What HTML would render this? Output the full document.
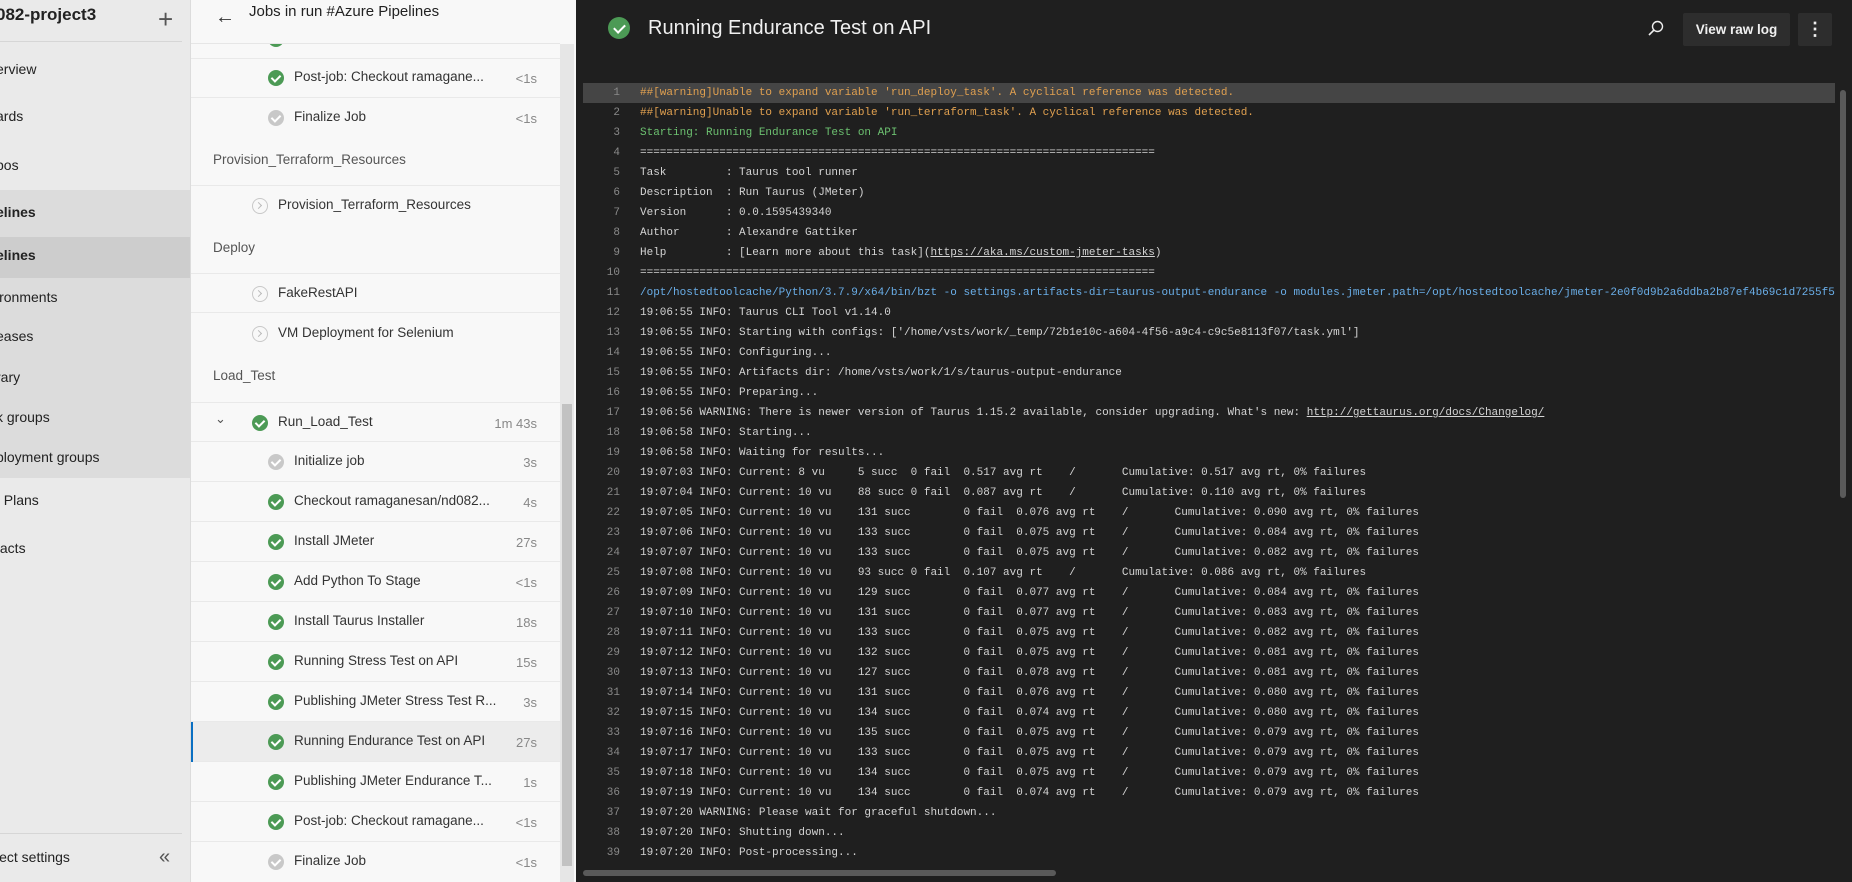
<!DOCTYPE html>
<html><head><meta charset="utf-8">
<style>
*{margin:0;padding:0;box-sizing:border-box}
body{width:1852px;height:882px;overflow:hidden;position:relative;font-family:"Segoe UI","Liberation Sans",sans-serif;background:#1f1f1f}
.nav{position:absolute;left:0;top:0;width:191px;height:882px;background:#eaeaea;border-right:1px solid #dcdcdc;overflow:hidden}
.nav .t{position:absolute;left:-4px;top:5px;font-size:17px;font-weight:bold;color:#222}
.nav .plus{position:absolute;left:158px;top:4px;font-size:26px;color:#555;font-weight:200}
.nav .hr{position:absolute;left:0;top:41px;width:182px;height:1px;background:#d6d6d6}
.nav .it{position:absolute;left:-4px;font-size:14px;color:#222;white-space:nowrap}
.band{position:absolute;left:0;width:191px}
.mid{position:absolute;left:191px;top:0;width:385px;height:882px;background:#f8f8f8;overflow:hidden}
.mid .hd{position:absolute;left:0;top:0;width:369px;height:44px;background:#f8f8f8;border-bottom:1px solid #e6e6e6;z-index:2}
.mid .hd .ar{position:absolute;left:24px;top:6px;font-size:20px;color:#333}
.mid .hd .tt{position:absolute;left:58px;top:3px;font-size:15px;color:#222}
.row{position:absolute;left:0;width:369px;height:40px;border-bottom:1px solid #e9e9e9;font-size:13.5px;color:#333}
.row .ic{position:absolute;top:12px;width:16px;height:16px;border-radius:50%}
.ok{background:#4c9a55}
.gr{background:#c8c8c8}
.ok::after,.gr::after{content:"";position:absolute;left:5px;top:3px;width:4px;height:7px;border:solid #fff;border-width:0 2px 2px 0;transform:rotate(45deg)}
.pend{border:1.5px solid #c8c8c8;background:none}
.pend::after{content:"";position:absolute;left:3px;top:4px;width:4px;height:4px;border:solid #bbb;border-width:1.5px 1.5px 0 0;transform:rotate(45deg)}
.row .tx{position:absolute;top:11px;white-space:nowrap}
.row .tm{position:absolute;right:23px;top:13px;color:#888;font-size:13px}
.sec{position:absolute;left:22px;font-size:13.5px;color:#555}
.sel{background:#ececec}
.sel::before{content:"";position:absolute;left:0;top:0;width:2px;height:40px;background:#0a6fc2}
.sb{position:absolute;left:560px;top:44px;width:14px;height:838px;background:#e6e6e6}
.sbt{position:absolute;left:562px;top:404px;width:10px;height:462px;background:#c2c2c2}
.log{position:absolute;left:576px;top:0;width:1276px;height:882px;background:#1f1f1f}
.title{position:absolute;left:648px;top:17px;font-size:20px;color:#f0f0f0}
.tick{position:absolute;left:608px;top:17px;width:22px;height:22px;border-radius:50%;background:#4c9a55}
.tick::after{content:"";position:absolute;left:8px;top:5px;width:5px;height:9px;border:solid #fff;border-width:0 2px 2px 0;transform:rotate(45deg)}
.btn{position:absolute;left:1683px;top:13px;width:107px;height:33px;background:#2d2d2d;border-radius:2px;color:#f0f0f0;font-size:13.5px;font-weight:600;text-align:center;line-height:33px}
.more{position:absolute;left:1798px;top:13px;width:34px;height:33px;background:#2d2d2d;border-radius:2px;color:#eee;text-align:center;font-size:18px;line-height:32px;font-weight:bold}
.lines{position:absolute;left:583px;top:83px;width:1252px;height:780px;overflow:hidden;font-family:"Liberation Mono",monospace;font-size:11px;color:#d4d4d4}
.l{height:20px;line-height:20px;white-space:pre;position:relative}
.l .n{position:absolute;left:0;width:37px;text-align:right;color:#8a8a8a}
.l .c{position:absolute;left:57px}
.w{color:#e0a050}.g{color:#6cc070}.b{color:#6aaee8}
.u{text-decoration:underline}
.hl{background:#454545}
</style></head><body>
<div class="nav">
  <div class="t">082-project3</div>
  <div class="plus">+</div>
  <div class="hr"></div>
  <div class="band" style="top:190px;height:288px;background:#dcdcdc"></div>
  <div class="band" style="top:237px;height:41px;background:#cdcdcd"></div>
  <div class="it" style="top:61px">erview</div>
  <div class="it" style="top:108px">ards</div>
  <div class="it" style="top:157px">pos</div>
  <div class="it" style="top:204px;font-weight:600">elines</div>
  <div class="it" style="top:247px;font-weight:600">elines</div>
  <div class="it" style="top:289px">ironments</div>
  <div class="it" style="top:328px">eases</div>
  <div class="it" style="top:369px">rary</div>
  <div class="it" style="top:409px">k groups</div>
  <div class="it" style="top:449px">ployment groups</div>
  <div class="it" style="top:492px">t Plans</div>
  <div class="it" style="top:540px">facts</div>
  <div class="hr" style="top:833px"></div>
  <div class="it" style="top:849px">ject settings</div>
  <div class="it" style="top:846px;left:159px;font-size:20px;color:#555">«</div>
</div>

<div class="mid">
  <div class="hd"><div class="ar">←</div><div class="tt">Jobs in run #Azure Pipelines</div></div>
  <div class="row" style="top:19px"><div class="ic ok" style="left:77px"></div><div class="tm">&lt;1s</div></div>
  <div class="row" style="top:58px"><div class="ic ok" style="left:77px"></div><div class="tx" style="left:103px">Post-job: Checkout ramagane...</div><div class="tm">&lt;1s</div></div>
  <div class="row" style="top:98px;border:none"><div class="ic gr" style="left:77px"></div><div class="tx" style="left:103px">Finalize Job</div><div class="tm">&lt;1s</div></div>
  <div class="sec" style="top:152px">Provision_Terraform_Resources</div>
  <div class="row" style="top:185px;border-top:1px solid #e9e9e9;border-bottom:none"><div class="ic pend" style="left:61px"></div><div class="tx" style="left:87px">Provision_Terraform_Resources</div></div>
  <div class="sec" style="top:240px">Deploy</div>
  <div class="row" style="top:273px;border-top:1px solid #e9e9e9"><div class="ic pend" style="left:61px"></div><div class="tx" style="left:87px">FakeRestAPI</div></div>
  <div class="row" style="top:314px;border:none"><div class="ic pend" style="left:61px"></div><div class="tx" style="left:87px">VM Deployment for Selenium</div></div>
  <div class="sec" style="top:368px">Load_Test</div>
  <div class="row" style="top:402px;border-top:1px solid #e9e9e9"><div class="tx" style="left:24px;top:8px;color:#555;font-size:13px">&#8964;</div><div class="ic ok" style="left:61px"></div><div class="tx" style="left:87px">Run_Load_Test</div><div class="tm">1m 43s</div></div>
  <div class="row" style="top:442px"><div class="ic gr" style="left:77px"></div><div class="tx" style="left:103px">Initialize job</div><div class="tm">3s</div></div>
  <div class="row" style="top:482px"><div class="ic ok" style="left:77px"></div><div class="tx" style="left:103px">Checkout ramaganesan/nd082...</div><div class="tm">4s</div></div>
  <div class="row" style="top:522px"><div class="ic ok" style="left:77px"></div><div class="tx" style="left:103px">Install JMeter</div><div class="tm">27s</div></div>
  <div class="row" style="top:562px"><div class="ic ok" style="left:77px"></div><div class="tx" style="left:103px">Add Python To Stage</div><div class="tm">&lt;1s</div></div>
  <div class="row" style="top:602px"><div class="ic ok" style="left:77px"></div><div class="tx" style="left:103px">Install Taurus Installer</div><div class="tm">18s</div></div>
  <div class="row" style="top:642px"><div class="ic ok" style="left:77px"></div><div class="tx" style="left:103px">Running Stress Test on API</div><div class="tm">15s</div></div>
  <div class="row" style="top:682px"><div class="ic ok" style="left:77px"></div><div class="tx" style="left:103px">Publishing JMeter Stress Test R...</div><div class="tm">3s</div></div>
  <div class="row sel" style="top:722px"><div class="ic ok" style="left:77px"></div><div class="tx" style="left:103px">Running Endurance Test on API</div><div class="tm">27s</div></div>
  <div class="row" style="top:762px"><div class="ic ok" style="left:77px"></div><div class="tx" style="left:103px">Publishing JMeter Endurance T...</div><div class="tm">1s</div></div>
  <div class="row" style="top:802px"><div class="ic ok" style="left:77px"></div><div class="tx" style="left:103px">Post-job: Checkout ramagane...</div><div class="tm">&lt;1s</div></div>
  <div class="row" style="top:842px;border:none"><div class="ic gr" style="left:77px"></div><div class="tx" style="left:103px">Finalize Job</div><div class="tm">&lt;1s</div></div>
</div>
<div class="sb"></div><div class="sbt"></div>

<div class="log"></div>
<div class="tick"></div>
<div class="title">Running Endurance Test on API</div>
<svg style="position:absolute;left:1647px;top:19px" width="18" height="18" viewBox="0 0 18 18"><circle cx="10.5" cy="7.5" r="5" fill="none" stroke="#eee" stroke-width="1.4"/><line x1="7" y1="11" x2="2" y2="16" stroke="#eee" stroke-width="1.6"/></svg>
<div class="btn">View raw log</div>
<div class="more">⋮</div>

<div class="lines">
<div class="l hl"><span class="n">1</span><span class="c w">##[warning]Unable to expand variable 'run_deploy_task'. A cyclical reference was detected.</span></div>
<div class="l"><span class="n">2</span><span class="c w">##[warning]Unable to expand variable 'run_terraform_task'. A cyclical reference was detected.</span></div>
<div class="l"><span class="n">3</span><span class="c g">Starting: Running Endurance Test on API</span></div>
<div class="l"><span class="n">4</span><span class="c">==============================================================================</span></div>
<div class="l"><span class="n">5</span><span class="c">Task         : Taurus tool runner</span></div>
<div class="l"><span class="n">6</span><span class="c">Description  : Run Taurus (JMeter)</span></div>
<div class="l"><span class="n">7</span><span class="c">Version      : 0.0.1595439340</span></div>
<div class="l"><span class="n">8</span><span class="c">Author       : Alexandre Gattiker</span></div>
<div class="l"><span class="n">9</span><span class="c">Help         : [Learn more about this task](<span class="u">https://aka.ms/custom-jmeter-tasks</span>)</span></div>
<div class="l"><span class="n">10</span><span class="c">==============================================================================</span></div>
<div class="l"><span class="n">11</span><span class="c b">/opt/hostedtoolcache/Python/3.7.9/x64/bin/bzt -o settings.artifacts-dir=taurus-output-endurance -o modules.jmeter.path=/opt/hostedtoolcache/jmeter-2e0f0d9b2a6ddba2b87ef4b69c1d7255f5</span></div>
<div class="l"><span class="n">12</span><span class="c">19:06:55 INFO: Taurus CLI Tool v1.14.0</span></div>
<div class="l"><span class="n">13</span><span class="c">19:06:55 INFO: Starting with configs: ['/home/vsts/work/_temp/72b1e10c-a604-4f56-a9c4-c9c5e8113f07/task.yml']</span></div>
<div class="l"><span class="n">14</span><span class="c">19:06:55 INFO: Configuring...</span></div>
<div class="l"><span class="n">15</span><span class="c">19:06:55 INFO: Artifacts dir: /home/vsts/work/1/s/taurus-output-endurance</span></div>
<div class="l"><span class="n">16</span><span class="c">19:06:55 INFO: Preparing...</span></div>
<div class="l"><span class="n">17</span><span class="c">19:06:56 WARNING: There is newer version of Taurus 1.15.2 available, consider upgrading. What's new: <span class="u">http://gettaurus.org/docs/Changelog/</span></span></div>
<div class="l"><span class="n">18</span><span class="c">19:06:58 INFO: Starting...</span></div>
<div class="l"><span class="n">19</span><span class="c">19:06:58 INFO: Waiting for results...</span></div>
<div class="l"><span class="n">20</span><span class="c">19:07:03 INFO: Current: 8 vu     5 succ  0 fail  0.517 avg rt    /       Cumulative: 0.517 avg rt, 0% failures</span></div>
<div class="l"><span class="n">21</span><span class="c">19:07:04 INFO: Current: 10 vu    88 succ 0 fail  0.087 avg rt    /       Cumulative: 0.110 avg rt, 0% failures</span></div>
<div class="l"><span class="n">22</span><span class="c">19:07:05 INFO: Current: 10 vu    131 succ        0 fail  0.076 avg rt    /       Cumulative: 0.090 avg rt, 0% failures</span></div>
<div class="l"><span class="n">23</span><span class="c">19:07:06 INFO: Current: 10 vu    133 succ        0 fail  0.075 avg rt    /       Cumulative: 0.084 avg rt, 0% failures</span></div>
<div class="l"><span class="n">24</span><span class="c">19:07:07 INFO: Current: 10 vu    133 succ        0 fail  0.075 avg rt    /       Cumulative: 0.082 avg rt, 0% failures</span></div>
<div class="l"><span class="n">25</span><span class="c">19:07:08 INFO: Current: 10 vu    93 succ 0 fail  0.107 avg rt    /       Cumulative: 0.086 avg rt, 0% failures</span></div>
<div class="l"><span class="n">26</span><span class="c">19:07:09 INFO: Current: 10 vu    129 succ        0 fail  0.077 avg rt    /       Cumulative: 0.084 avg rt, 0% failures</span></div>
<div class="l"><span class="n">27</span><span class="c">19:07:10 INFO: Current: 10 vu    131 succ        0 fail  0.077 avg rt    /       Cumulative: 0.083 avg rt, 0% failures</span></div>
<div class="l"><span class="n">28</span><span class="c">19:07:11 INFO: Current: 10 vu    133 succ        0 fail  0.075 avg rt    /       Cumulative: 0.082 avg rt, 0% failures</span></div>
<div class="l"><span class="n">29</span><span class="c">19:07:12 INFO: Current: 10 vu    132 succ        0 fail  0.075 avg rt    /       Cumulative: 0.081 avg rt, 0% failures</span></div>
<div class="l"><span class="n">30</span><span class="c">19:07:13 INFO: Current: 10 vu    127 succ        0 fail  0.078 avg rt    /       Cumulative: 0.081 avg rt, 0% failures</span></div>
<div class="l"><span class="n">31</span><span class="c">19:07:14 INFO: Current: 10 vu    131 succ        0 fail  0.076 avg rt    /       Cumulative: 0.080 avg rt, 0% failures</span></div>
<div class="l"><span class="n">32</span><span class="c">19:07:15 INFO: Current: 10 vu    134 succ        0 fail  0.074 avg rt    /       Cumulative: 0.080 avg rt, 0% failures</span></div>
<div class="l"><span class="n">33</span><span class="c">19:07:16 INFO: Current: 10 vu    135 succ        0 fail  0.075 avg rt    /       Cumulative: 0.079 avg rt, 0% failures</span></div>
<div class="l"><span class="n">34</span><span class="c">19:07:17 INFO: Current: 10 vu    133 succ        0 fail  0.075 avg rt    /       Cumulative: 0.079 avg rt, 0% failures</span></div>
<div class="l"><span class="n">35</span><span class="c">19:07:18 INFO: Current: 10 vu    134 succ        0 fail  0.075 avg rt    /       Cumulative: 0.079 avg rt, 0% failures</span></div>
<div class="l"><span class="n">36</span><span class="c">19:07:19 INFO: Current: 10 vu    134 succ        0 fail  0.074 avg rt    /       Cumulative: 0.079 avg rt, 0% failures</span></div>
<div class="l"><span class="n">37</span><span class="c">19:07:20 WARNING: Please wait for graceful shutdown...</span></div>
<div class="l"><span class="n">38</span><span class="c">19:07:20 INFO: Shutting down...</span></div>
<div class="l"><span class="n">39</span><span class="c">19:07:20 INFO: Post-processing...</span></div>
</div>
<div style="position:absolute;left:1840px;top:90px;width:6px;height:408px;background:#5a5a5a;border-radius:3px"></div>
<div style="position:absolute;left:583px;top:870px;width:473px;height:6px;background:#5a5a5a;border-radius:3px"></div>
</body></html>
